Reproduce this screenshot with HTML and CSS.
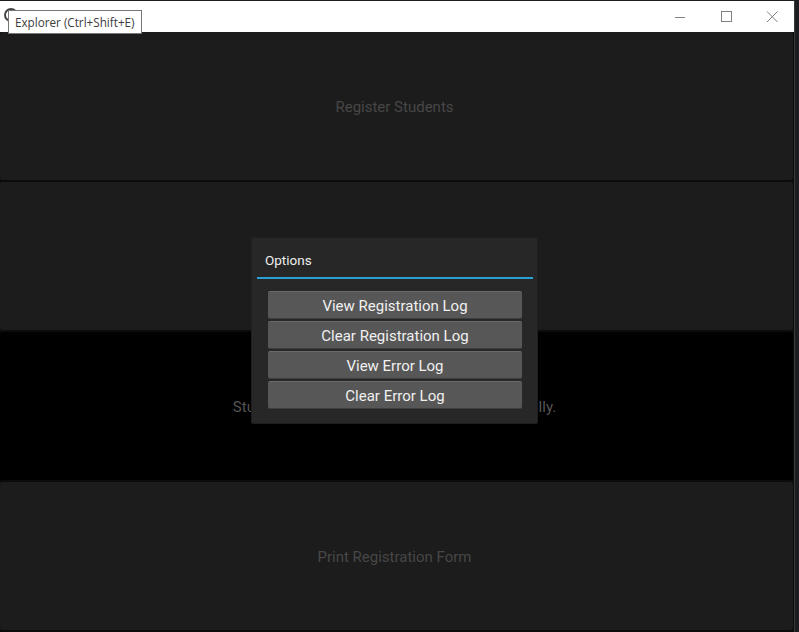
FILE: index.html
```html
<!DOCTYPE html>
<html>
<head>
<meta charset="utf-8">
<link rel="stylesheet" href="styles.css">
</head>
<body>
<div class="desktop">
  <div class="window">
    <div class="titlebar">
      <span class="app-icon"></span>
      <div class="controls">
        <svg class="ctl" width="46" height="30" viewBox="0 0 46 30"><path d="M18 15.5h10" stroke="#808080" stroke-width="1"/></svg>
        <svg class="ctl" width="46" height="30" viewBox="0 0 46 30"><rect x="18.5" y="9.5" width="10" height="10" fill="none" stroke="#808080" stroke-width="1"/></svg>
        <svg class="ctl" width="46" height="30" viewBox="0 0 46 30"><path d="M18 9.5l10.5 10.5M28.5 9.5L18 20" stroke="#808080" stroke-width="1"/></svg>
      </div>
    </div>
    <div class="content">
      <div class="panel"><span class="label">Register Students</span></div>
      <div class="panel"><span class="label">Options</span></div>
      <div class="panel panel-black"><span class="label status">Students have now been registered successfully.</span></div>
      <div class="panel"><span class="label">Print Registration Form</span></div>
    </div>
  </div>
  <div class="tooltip">Explorer (Ctrl+Shift+E)</div>
  <div class="dialog">
    <div class="dialog-title">Options</div>
    <div class="dialog-buttons">
      <button class="btn">View Registration Log</button>
      <button class="btn">Clear Registration Log</button>
      <button class="btn">View Error Log</button>
      <button class="btn">Clear Error Log</button>
    </div>
  </div>
</div>
</body>
</html>
```

FILE: styles.css
```css
html, body {
  margin: 0;
  padding: 0;
  background: #1b1d20;
  overflow: hidden;
}
.desktop {
  position: relative;
  width: 799px;
  height: 632px;
  padding-top: 1px;
  box-sizing: border-box;
}
.window {
  width: 795px;
  height: 631px;
  display: flex;
  flex-direction: column;
  border-right: 1px solid #3a3a3a;
  box-sizing: border-box;
  background: #000;
}
.titlebar {
  height: 31px;
  background: #ffffff;
  display: flex;
  align-items: center;
  justify-content: space-between;
  flex-shrink: 0;
}
.app-icon {
  width: 10px;
  height: 10px;
  border: 2px solid #444;
  border-radius: 50%;
  margin-left: 4px;
  margin-top: -4px;
}
.controls {
  display: flex;
  margin-right: -1px;
  gap: 0;
}
.ctl {
  display: block;
}
.content {
  flex: 1;
  display: flex;
  flex-direction: column;
  gap: 2px;
  padding: 0 1px 2px 0;
  background: #0b0b0b;
}
.panel {
  flex: 1;
  background: #1c1c1c;
  border-radius: 2px;
  display: flex;
  align-items: center;
  justify-content: center;
  padding: 1px 4px 0 0;
  font-family: Roboto, "Liberation Sans", sans-serif;
  font-size: 15px;
}
.panel-black {
  background: #000;
}
.label {
  color: #474747;
  white-space: nowrap;
}
.status {
  color: #555;
}
.tooltip {
  position: absolute;
  left: 8px;
  top: 10px;
  height: 24px;
  box-sizing: border-box;
  padding: 0 6px;
  border: 1px solid #767676;
  background: #fff;
  color: #3c3c3c;
  font-family: "Open Sans", "Noto Sans", sans-serif;
  font-size: 11.7px;
  line-height: 22px;
  white-space: nowrap;
}
.dialog {
  position: absolute;
  left: 251px;
  top: 237px;
  width: 287px;
  height: 187px;
  box-sizing: border-box;
  background: #272727;
  border: 1px solid #1f1f1f;
  border-radius: 2px;
  padding: 0 4px 0 5px;
  font-family: Roboto, "Liberation Sans", sans-serif;
}
.dialog-title {
  color: #eeeeee;
  font-size: 13.5px;
  height: 39px;
  line-height: 45px;
  padding-left: 8px;
  border-bottom: 2px solid #2a9fd6;
}
.dialog-buttons {
  display: flex;
  flex-direction: column;
  gap: 2px;
  padding: 12px 11px 0 11px;
}
.btn {
  height: 28px;
  background: #575757;
  border: none;
  border-top: 1px solid #6a6a6a;
  border-bottom: 1px solid #3e3e3e;
  border-radius: 2px;
  color: #f0f0f0;
  font-family: Roboto, "Liberation Sans", sans-serif;
  font-size: 15px;
  padding: 2px 0 0 0;
  box-sizing: border-box;
}
```
